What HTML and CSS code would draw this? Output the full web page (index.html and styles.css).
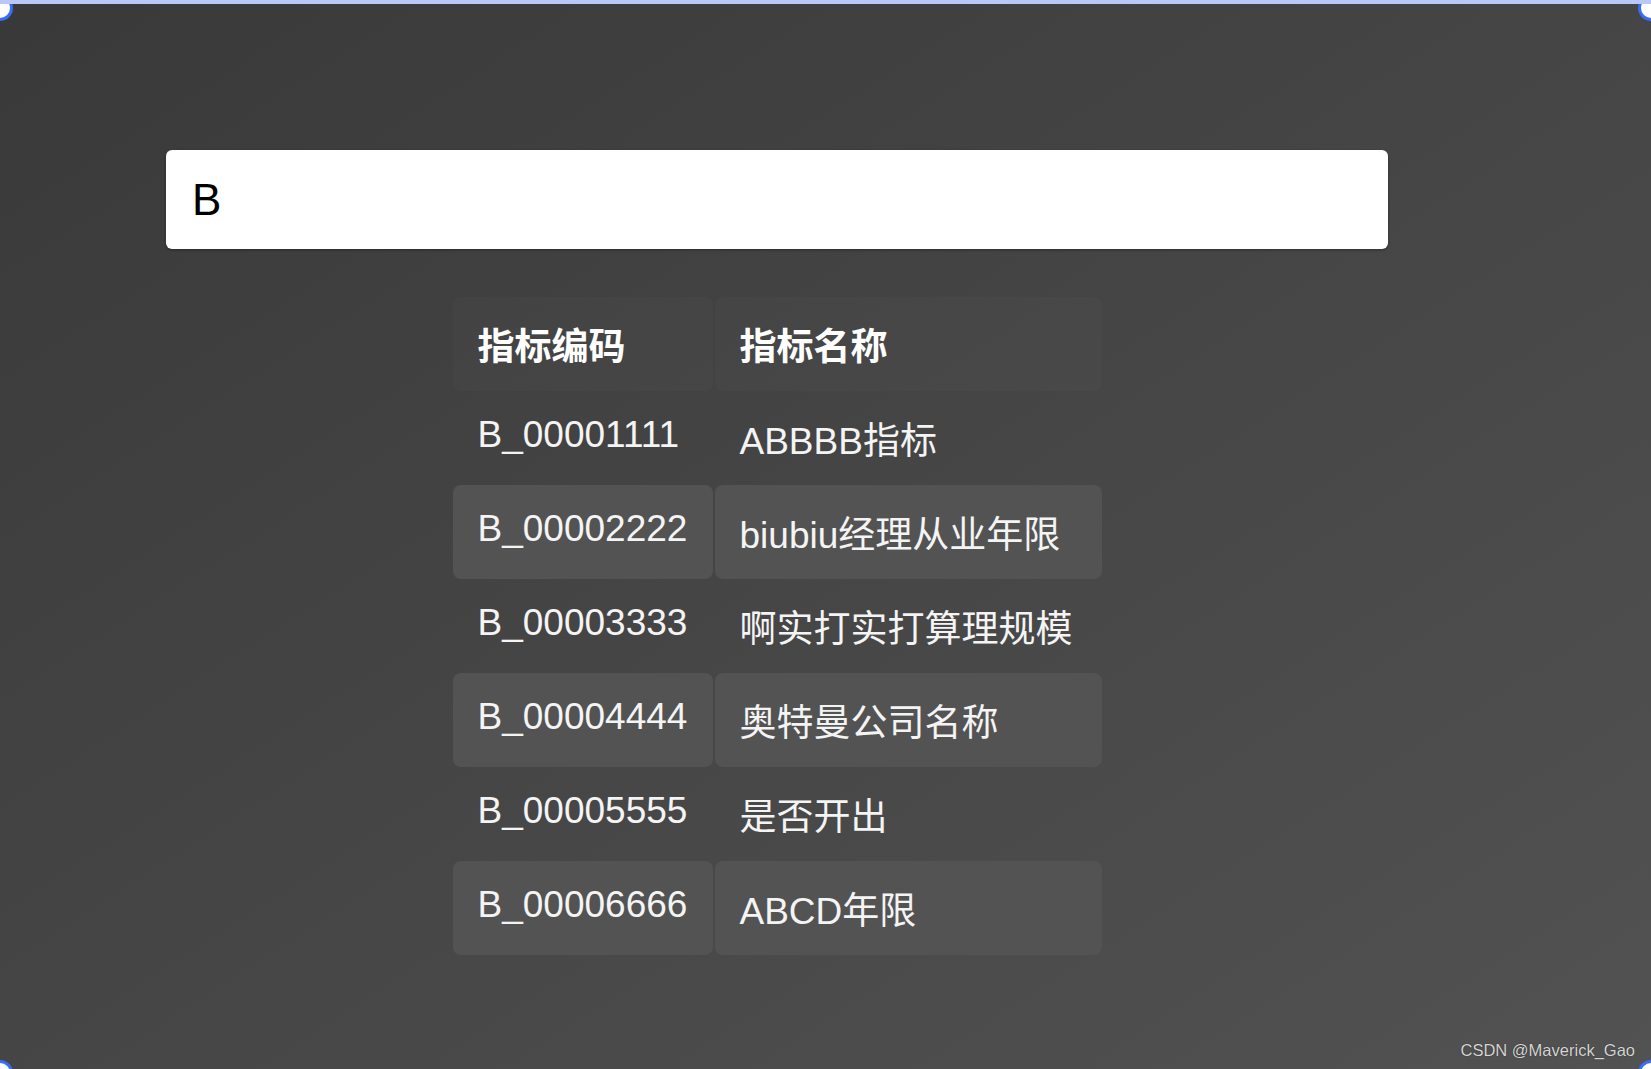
FILE: index.html
```html
<!DOCTYPE html>
<html lang="zh-CN">
<head>
    <meta charset="UTF-8">
    <meta name="viewport" content="width=device-width, initial-scale=1.0">
    <title>指标搜索</title>
    <link rel="stylesheet" href="styles.css">
</head>
<body>
    <div class="page">
        <div class="search-wrap">
            <input class="search-input" type="text" value="B">

            <div class="result-table">
                <div class="cell head">指标编码</div>
                <div class="cell head">指标名称</div>

                <div class="cell">B_00001111</div>
                <div class="cell name">ABBBB指标</div>

                <div class="cell stripe">B_00002222</div>
                <div class="cell name stripe">biubiu经理从业年限</div>

                <div class="cell">B_00003333</div>
                <div class="cell name">啊实打实打算理规模</div>

                <div class="cell stripe">B_00004444</div>
                <div class="cell name stripe">奥特曼公司名称</div>

                <div class="cell">B_00005555</div>
                <div class="cell name">是否开出</div>

                <div class="cell stripe">B_00006666</div>
                <div class="cell name stripe">ABCD年限</div>
            </div>
        </div>

        <!-- selection handles from the screenshot tool -->
        <span class="handle tl"></span>
        <span class="handle tr"></span>
        <span class="handle bl"></span>
        <span class="handle br"></span>

        <div class="watermark">CSDN @Maverick_Gao</div>
    </div>
</body>
</html>
```

FILE: styles.css
```css
body {
    margin: 0;
    font-family: "Liberation Sans", "Noto Sans CJK SC", Arial, sans-serif;
}

.page {
    position: relative;
    box-sizing: border-box;
    height: 1069px;
    overflow: hidden;
    padding: 146px 0 0 166px;
    border-top: 4px solid #b9c7fb;
    background: linear-gradient(to bottom right, #393939, #525252);
}

.search-wrap {
    width: 1222px;
}

.search-input {
    display: block;
    box-sizing: border-box;
    width: 100%;
    height: 99px;
    margin: 0;
    padding: 0 26px;
    border: none;
    border-radius: 6px;
    outline: none;
    background-color: #fff;
    color: #000;
    font-family: "Liberation Sans", Arial, sans-serif;
    font-size: 44px;
    box-shadow: 0 1px 3px rgba(0, 0, 0, 0.35);
}

.result-table {
    display: grid;
    grid-template-columns: 260px 387px;
    grid-auto-rows: 94px;
    column-gap: 2px;
    width: 649px;
    margin: 48px auto 0;
}

.cell {
    display: flex;
    align-items: center;
    box-sizing: border-box;
    padding-left: 25px;
    padding-bottom: 6px;
    border-radius: 8px;
    color: #f4f4f4;
    font-size: 37px;
    white-space: nowrap;
}

.cell.name {
    padding-bottom: 0;
}

.head {
    padding-bottom: 0;
    font-weight: 700;
    color: #fff;
    background-color: rgba(255, 255, 255, 0.018);
}

.stripe {
    background-color: #535353;
}

.handle {
    position: absolute;
    width: 20px;
    height: 20px;
    border: 3px solid #3a6df5;
    border-radius: 50%;
    background-color: #fff;
}

.tl { left: -13px; top: -9px; }
.tr { right: -13px; top: -9px; }
.bl { left: -13px; bottom: -17px; }
.br { right: -13px; bottom: -17px; }

.watermark {
    position: absolute;
    right: 16px;
    bottom: 9px;
    font-family: "Liberation Sans", Arial, sans-serif;
    font-size: 16.5px;
    color: #d6d6d6;
    text-shadow: 0 0 1px rgba(0, 0, 0, 0.7);
}
```
